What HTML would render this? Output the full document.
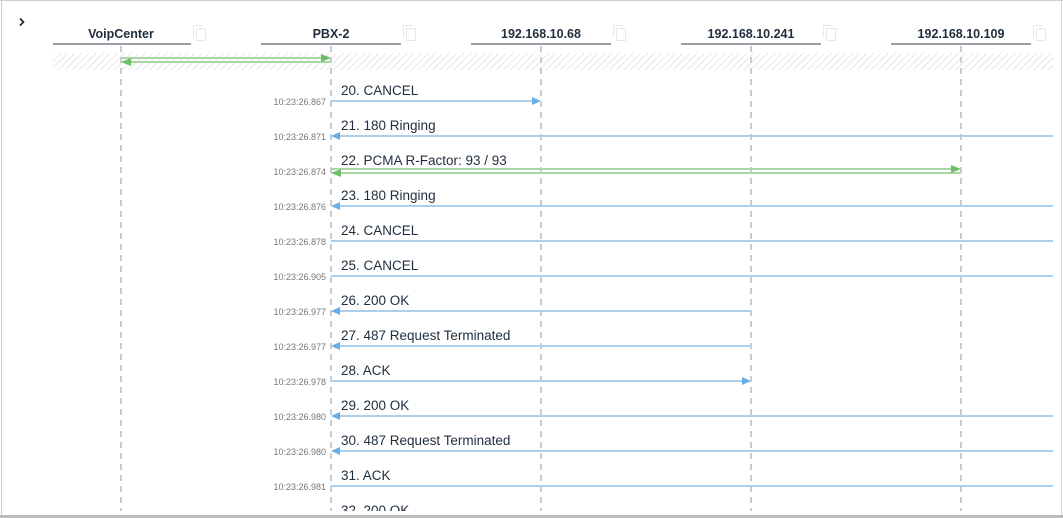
<!DOCTYPE html>
<html><head><style>
body{margin:0;width:1063px;height:518px;overflow:hidden;background:#fff;font-family:"Liberation Sans",Arial,sans-serif;}
</style></head><body>
<svg width="1063" height="518" xmlns="http://www.w3.org/2000/svg" style="position:absolute;left:0;top:0">
<defs>
<pattern id="h" width="5" height="5" patternUnits="userSpaceOnUse" patternTransform="rotate(45)">
<rect width="5" height="5" fill="#fff"/><line x1="0" y1="0" x2="0" y2="5" stroke="#e6e6e6" stroke-width="2"/>
</pattern>
<clipPath id="c"><rect x="0" y="0" width="1063" height="511"/></clipPath>
</defs>
<rect x="0" y="0" width="1063" height="518" fill="#fff"/>
<rect x="53" y="53" width="1000" height="17" fill="url(#h)"/>
<line x1="0" y1="0.5" x2="1063" y2="0.5" stroke="#c9ced4"/>
<line x1="1.5" y1="0" x2="1.5" y2="516" stroke="#c9ced4"/>
<line x1="1061.5" y1="0" x2="1061.5" y2="516" stroke="#d5d8dc"/>
<rect x="0" y="515" width="1063" height="3" fill="#bbbbbb"/>
<path d="M20 18.5l3.5 3.5-3.5 3.5" fill="none" stroke="#222" stroke-width="1.6"/>
<g clip-path="url(#c)">
<g stroke="#c8cbd0" stroke-width="2" stroke-dasharray="6,5">
<line x1="121" y1="46" x2="121" y2="512"/><line x1="331" y1="46" x2="331" y2="512"/><line x1="541" y1="46" x2="541" y2="512"/><line x1="751" y1="46" x2="751" y2="512"/><line x1="961" y1="46" x2="961" y2="512"/>
</g>
<g font-size="13.5" fill="#1f2d3d">
<text x="341" y="515">32. 200 OK</text>
</g>
</g>
<g stroke="#9aa0a8" stroke-width="2">
<line x1="53" y1="44" x2="191" y2="44"/><line x1="261" y1="44" x2="401" y2="44"/><line x1="471" y1="44" x2="611" y2="44"/><line x1="681" y1="44" x2="821" y2="44"/><line x1="891" y1="44" x2="1031" y2="44"/>
</g>
<g font-size="12.5" font-weight="bold" fill="#1f2d3d" text-anchor="middle">
<text x="121" y="38">VoipCenter</text><text x="331" y="38">PBX-2</text><text x="541" y="38">192.168.10.68</text><text x="751" y="38">192.168.10.241</text><text x="961" y="38">192.168.10.109</text>
</g>
<g fill="none" stroke="#e8e8e8" stroke-width="1">
<path d="M193.5 37V25.5h9"/><rect x="196.5" y="28.5" width="9" height="12"/>
<path d="M403.5 37V25.5h9"/><rect x="406.5" y="28.5" width="9" height="12"/>
<path d="M613.5 37V25.5h9"/><rect x="616.5" y="28.5" width="9" height="12"/>
<path d="M823.5 37V25.5h9"/><rect x="826.5" y="28.5" width="9" height="12"/>
<path d="M1033.5 37V25.5h9"/><rect x="1036.5" y="28.5" width="9" height="12"/>
</g>
<g stroke="#a9d8a4" stroke-width="2"><line x1="121" y1="58" x2="325" y2="58"/><line x1="127" y1="62" x2="331" y2="62"/></g>
<path d="M331 58l-10-4v8z M121 62l10-4v8z" fill="#6cbf66"/>
<g font-size="13.5" fill="#1f2d3d">
<text x="341" y="95">20. CANCEL</text><text x="341" y="130">21. 180 Ringing</text><text x="341" y="165">22. PCMA R-Factor: 93 / 93</text><text x="341" y="200">23. 180 Ringing</text><text x="341" y="235">24. CANCEL</text><text x="341" y="270">25. CANCEL</text><text x="341" y="305">26. 200 OK</text><text x="341" y="340">27. 487 Request Terminated</text><text x="341" y="375">28. ACK</text><text x="341" y="410">29. 200 OK</text><text x="341" y="445">30. 487 Request Terminated</text><text x="341" y="480">31. ACK</text>
</g>
<g font-size="9" fill="#777" text-anchor="end">
<text x="326" y="105">10:23:26.867</text><text x="326" y="140">10:23:26.871</text><text x="326" y="175">10:23:26.874</text><text x="326" y="210">10:23:26.876</text><text x="326" y="245">10:23:26.878</text><text x="326" y="280">10:23:26.905</text><text x="326" y="315">10:23:26.977</text><text x="326" y="350">10:23:26.977</text><text x="326" y="385">10:23:26.978</text><text x="326" y="420">10:23:26.980</text><text x="326" y="455">10:23:26.980</text><text x="326" y="490">10:23:26.981</text>
</g>
<g stroke="#aad0ee" stroke-width="2">
<line x1="331" y1="101" x2="533" y2="101"/>
<line x1="338" y1="136" x2="1053" y2="136"/>
<line x1="338" y1="206" x2="1053" y2="206"/>
<line x1="331" y1="241" x2="1053" y2="241"/>
<line x1="331" y1="276" x2="1053" y2="276"/>
<line x1="338" y1="311" x2="751" y2="311"/>
<line x1="338" y1="346" x2="751" y2="346"/>
<line x1="331" y1="381" x2="743" y2="381"/>
<line x1="338" y1="416" x2="1053" y2="416"/>
<line x1="338" y1="451" x2="1053" y2="451"/>
<line x1="331" y1="486" x2="1053" y2="486"/>
</g>
<path fill="#6aaee6" d="M541 101l-9-4v8z M331 136l9-4v8z M331 206l9-4v8z M331 311l9-4v8z M331 346l9-4v8z M751 381l-9-4v8z M331 416l9-4v8z M331 451l9-4v8z"/>
<g stroke="#a9d8a4" stroke-width="2"><line x1="331" y1="169" x2="953" y2="169"/><line x1="338" y1="173" x2="961" y2="173"/></g>
<path d="M961 169l-10-4v8z M331 173l10-4v8z" fill="#6cbf66"/>
</svg>
</body></html>
